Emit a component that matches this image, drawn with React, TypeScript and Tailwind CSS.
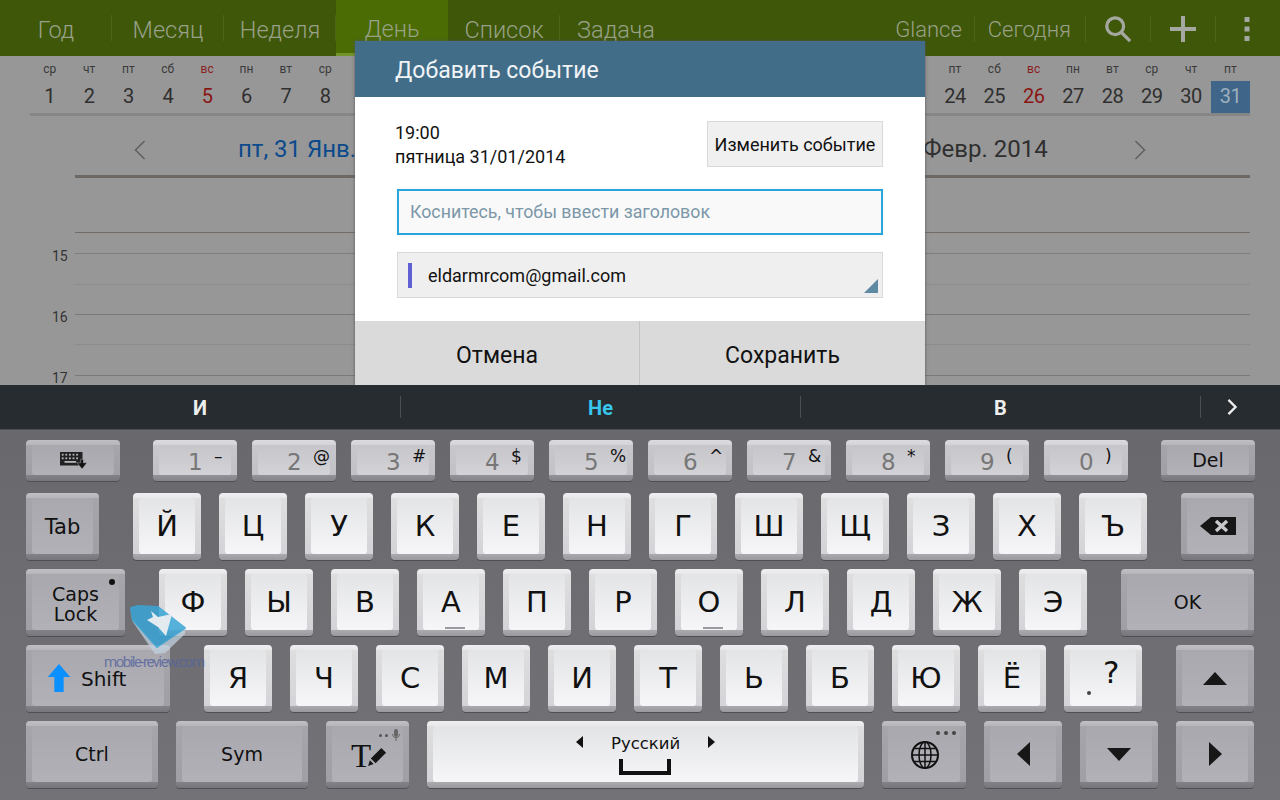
import type { ReactNode } from 'react';

const tabs = ['Год', 'Месяц', 'Неделя', 'День', 'Список', 'Задача'];
const weekNames = ['пн', 'вт', 'ср', 'чт', 'пт', 'сб', 'вс'];
const days = Array.from({ length: 31 }, (_, i) => ({
  num: i + 1,
  name: weekNames[(i + 2) % 7],
  sunday: (i + 2) % 7 === 6,
  // these sit behind the dialog
  covered: i + 1 > 8 && i + 1 < 24,
}));

const keyKinds = {
  light: {
    outer:
      'bg-[linear-gradient(#efeff1_0,#e8e8ea_5px,#dededf_5px,#d4d4d8_calc(100%-6px),#abaaaf_calc(100%-6px),#9a999e_100%)]',
    face: 'bg-gradient-to-b from-[#e3e4e6] to-[#f6f6f8] text-[#111]',
  },
  gray: {
    outer:
      'bg-[linear-gradient(#c0bfc4_0,#b6b5ba_5px,#a6a5ab_5px,#a09fa5_calc(100%-6px),#838288_calc(100%-6px),#77767c_100%)]',
    face: 'bg-gradient-to-b from-[#a9a8af] to-[#b2b1b8] text-[#111]',
  },
  digit: {
    outer:
      'bg-[linear-gradient(#dcdbdf_0,#d4d3d7_5px,#c8c7cc_5px,#c2c1c6_calc(100%-6px),#939298_calc(100%-6px),#85848a_100%)]',
    face: 'bg-gradient-to-b from-[#c6c5ca] to-[#d3d2d7] text-[#777]',
  },
};

function Key({
  kind = 'light',
  className = '',
  children,
}: {
  kind?: 'light' | 'gray' | 'digit';
  className?: string;
  children?: ReactNode;
}) {
  const k = keyKinds[kind];
  return (
    <div
      className={`flex-none flex rounded-[4px] pt-[5px] px-[6px] pb-[6px] shadow-[0_1px_0_#4f4e53] ${k.outer} ${className}`}
    >
      <div className={`relative flex-1 flex items-center justify-center rounded-[3px] ${k.face}`}>
        {children}
      </div>
    </div>
  );
}

function LetterKey({ ch, mark }: { ch: string; mark?: boolean }) {
  return (
    <Key className="w-[68px]">
      <span className="text-[29px] leading-none">{ch}</span>
      {mark && <span className="absolute bottom-[1px] left-[22px] w-[20px] h-[2px] bg-[#9a9a9f]" />}
    </Key>
  );
}

function DigitKey({ d, s }: { d: string; s: string }) {
  return (
    <Key kind="digit" className="w-[84px]">
      <span className="absolute left-[29px] top-[6px] text-[23px] leading-none">{d}</span>
      <span className="absolute left-[55px] top-[0px] text-[17px] leading-[22px] text-[#111]">{s}</span>
    </Key>
  );
}

function Triangle({ dir }: { dir: 'up' | 'down' | 'left' | 'right' }) {
  const points = {
    up: '0,13 24,13 12,0',
    down: '0,0 24,0 12,13',
    left: '13,0 13,24 0,12',
    right: '0,0 0,24 13,12',
  }[dir];
  const size = dir === 'up' || dir === 'down' ? 'w-[24px] h-[13px]' : 'w-[13px] h-[24px]';
  const box = dir === 'up' || dir === 'down' ? '0 0 24 13' : '0 0 13 24';
  return (
    <svg viewBox={box} className={size}>
      <polygon points={points} fill="#171717" />
    </svg>
  );
}

function TopBar() {
  return (
    <div className="flex h-[56px] bg-[#3f5708] text-[#98a188] text-[23.5px] font-light shadow-[0_2px_2px_#77777a]">
      {tabs.map((t) => (
        <div
          key={t}
          className={
            t === 'День'
              ? 'w-[112px] flex items-center justify-center pt-[7px] bg-[#4b6b05] border-b-[3px] border-[#75932c]'
              : 'w-[112px] flex items-center justify-center pt-[5px] relative'
          }
        >
          {t}
          {t !== 'Задача' && t !== 'День' && (
            <span className="absolute right-0 top-[15px] h-[26px] w-px bg-[#4d6419]" />
          )}
        </div>
      ))}
      <div className="flex-1" />
      <div className="flex items-center pt-[2px] text-[22px] pr-[30px]">
        <span className="mr-[12px]">Glance</span>
        <span className="h-[26px] w-px bg-[#4d6419] mr-[13px]" />
        <span className="mr-[14px]">Сегодня</span>
        <span className="h-[26px] w-px bg-[#4d6419] mr-[18px]" />
        <svg viewBox="0 0 30 30" className="w-[28px] h-[28px] mr-[18px]">
          <circle cx="12" cy="12" r="9" fill="none" stroke="#a5a8a0" strokeWidth="3.5" />
          <line x1="18.5" y1="18.5" x2="28" y2="28" stroke="#a5a8a0" strokeWidth="3.5" />
        </svg>
        <span className="h-[26px] w-px bg-[#4d6419] mr-[19px]" />
        <svg viewBox="0 0 26 26" className="w-[26px] h-[26px] mr-[19px]">
          <rect x="0" y="11" width="26" height="4" fill="#a5a8a0" />
          <rect x="11" y="0" width="4" height="26" fill="#a5a8a0" />
        </svg>
        <span className="h-[26px] w-px bg-[#4d6419] mr-[28px]" />
        <svg viewBox="0 0 6 24" className="w-[6px] h-[24px]">
          <rect width="5" height="5" x="0.5" y="0" fill="#a5a8a0" />
          <rect width="5" height="5" x="0.5" y="9.5" fill="#a5a8a0" />
          <rect width="5" height="5" x="0.5" y="19" fill="#a5a8a0" />
        </svg>
      </div>
    </div>
  );
}

function Calendar() {
  return (
    <div className="flex-1 bg-[#979797] text-[#2f2f2f]">
      <div className="ml-[30px] w-[1220px] h-[60px] border-b-[3px] border-[#868686] flex">
        {days.map((d) => (
          <div key={d.num} className={`flex-1 flex flex-col items-center ${d.covered ? 'invisible' : ''}`}>
            <span className={`text-[12px] leading-[12px] mt-[7px] ${d.sunday ? 'text-[#8a1f1f]' : 'text-[#3a3a3a]'}`}>
              {d.name}
            </span>
            <span
              className={`text-[20px] tracking-[-0.5px] leading-[30px] mt-[6px] w-full h-[32px] text-center ${
                d.sunday ? 'text-[#8a1515]' : ''
              } ${d.num === 31 ? 'bg-[#3f6588] text-[#9eb0be]' : ''}`}
            >
              {d.num}
            </span>
          </div>
        ))}
      </div>
      <div className="relative h-[62px] ml-[75px] w-[1175px] border-b-[3px] border-[#6d6863] text-[24px]">
        <svg viewBox="0 0 12 22" className="absolute left-[59px] top-[24px] w-[12px] h-[20px]">
          <polyline points="11,1 1,11 11,21" fill="none" stroke="#5f5f5f" strokeWidth="1.6" />
        </svg>
        <span className="absolute left-[163px] top-[17px] text-[#0b4a8c] leading-[32px] whitespace-nowrap">
          пт, 31 Янв.
        </span>
        <span className="absolute left-[848px] top-[17px] leading-[32px] whitespace-nowrap">Февр. 2014</span>
        <svg viewBox="0 0 12 22" className="absolute left-[1059px] top-[24px] w-[12px] h-[20px]">
          <polyline points="1,1 11,11 1,21" fill="none" stroke="#5f5f5f" strokeWidth="1.6" />
        </svg>
      </div>
      <div className="ml-[75px] w-[1175px]">
        <div className="h-[55px] border-b border-[#736c66]" />
        <HourLine label="15" h="h-[21px]" line="border-[#7d7d7d]" />
        <div className="h-[31px] border-b border-[#8c8c8c]" />
        <HourLine label="16" h="h-[30px]" line="border-[#787878]" />
        <div className="h-[30px] border-b border-[#8c8c8c]" />
        <HourLine label="17" h="h-[31px]" line="border-[#7a7a7a]" />
      </div>
    </div>
  );
}

function HourLine({ label, h, line }: { label: string; h: string; line: string }) {
  return (
    <div className={`relative border-b ${h} ${line}`}>
      <span className="absolute left-[-23px] bottom-[-12px] text-[14px] leading-[18px] text-[#333]">{label}</span>
    </div>
  );
}

function Dialog() {
  return (
    <div className="absolute left-[355px] top-[41px] w-[570px] h-[344px] flex flex-col shadow-[0_0_3px_#555]">
      <div className="h-[56px] bg-[#426d89] text-[#f0f4f6] text-[23px] flex items-center pl-[40px] pt-[4px]">
        Добавить событие
      </div>
      <div className="flex-1 bg-white px-[42px] pt-[24px]">
        <div className="flex justify-between items-start">
          <div className="text-[18px] leading-[24px] text-[#111] -ml-[2px]">
            <div>19:00</div>
            <div>пятница 31/01/2014</div>
          </div>
          <div className="w-[176px] h-[46px] bg-[#f0f0f0] border border-[#d9d9d9] text-[18px] text-[#111] flex items-center justify-center">
            Изменить событие
          </div>
        </div>
        <div className="mt-[20px] h-[46px] border-2 border-[#2aa5da] bg-[#f9f9f9] text-[17.8px] text-[#7b97a8] flex items-center pl-[11px]">
          Коснитесь, чтобы ввести заголовок
        </div>
        <div className="relative mt-[17px] h-[46px] border border-[#d9d9d9] bg-[#efefef] text-[18px] text-[#111] flex items-center pl-[10px]">
          <span className="w-[4px] h-[25px] bg-[#6060d2] mr-[16px]" />
          eldarmrcom@gmail.com
          <svg viewBox="0 0 14 14" className="absolute right-[4px] bottom-[4px] w-[14px] h-[14px]">
            <polygon points="14,0 14,14 0,14" fill="#5f8aa3" />
          </svg>
        </div>
      </div>
      <div className="h-[64px] bg-[#dadada] flex text-[23px] text-[#111]">
        <div className="w-[285px] flex items-center justify-center border-r border-[#c4c4c4] pt-[6px]">Отмена</div>
        <div className="flex-1 flex items-center justify-center pt-[6px]">Сохранить</div>
      </div>
    </div>
  );
}

function Suggestions() {
  return (
    <div className="relative h-[45px] bg-[#272c30] flex text-[20px] font-bold text-[#eee] border-b border-[#4c4e52]">
      {['И', 'Не', 'В'].map((s) => (
        <div
          key={s}
          className={`w-[400px] first:w-[401px] flex items-center justify-center ${s === 'Не' ? 'text-[#38c6ee]' : ''}`}
        >
          <span className="flex-1 text-center pt-[2px]">{s}</span>
          <span className="h-[22px] w-px bg-[#4a4f53]" />
        </div>
      ))}
      <div className="flex-1 flex items-center justify-center pr-[18px]">
        <svg viewBox="0 0 12 18" className="w-[12px] h-[16px]">
          <polyline points="2,1 10,9 2,17" fill="none" stroke="#eee" strokeWidth="2.6" />
        </svg>
      </div>
    </div>
  );
}

function Keyboard() {
  return (
    <div className="flex-1 bg-gradient-to-b from-[#69686d] to-[#737277] px-[26px] pt-[10px] font-['DejaVu_Sans',sans-serif]">
      <div className="flex h-[41px] gap-[15px]">
        <Key kind="gray" className="w-[94px] mr-[18px]">
          <svg viewBox="0 0 30 22" className="w-[27px] h-[20px] mt-[1px]">
            <rect x="0" y="1" width="25" height="15" fill="#222" />
            <g fill="#b5b5ba">
              <rect x="2" y="3" width="2" height="2" />
              <rect x="6" y="3" width="2" height="2" />
              <rect x="10" y="3" width="2" height="2" />
              <rect x="14" y="3" width="2" height="2" />
              <rect x="18" y="3" width="2" height="2" />
              <rect x="2" y="7" width="2" height="2" />
              <rect x="6" y="7" width="2" height="2" />
              <rect x="10" y="7" width="2" height="2" />
              <rect x="14" y="7" width="2" height="2" />
              <rect x="18" y="7" width="2" height="2" />
              <rect x="5" y="11" width="13" height="2" />
            </g>
            <polygon points="19,13 23,13 23,9 26,9 26,13 30,13 24.5,20" fill="#111" stroke="#acabb3" strokeWidth="0.6" />
          </svg>
        </Key>
        <DigitKey d="1" s="–" />
        <DigitKey d="2" s="@" />
        <DigitKey d="3" s="#" />
        <DigitKey d="4" s="$" />
        <DigitKey d="5" s="%" />
        <DigitKey d="6" s="^" />
        <DigitKey d="7" s="&" />
        <DigitKey d="8" s="*" />
        <DigitKey d="9" s="(" />
        <DigitKey d="0" s=")" />
        <Key kind="gray" className="w-[94px] ml-[18px]">
          <span className="text-[19px]">Del</span>
        </Key>
      </div>

      <div className="flex h-[67px] gap-[18px] mt-[12px]">
        <Key kind="gray" className="w-[73px] mr-[16px]">
          <span className="text-[21px] pt-[4px]">Tab</span>
        </Key>
        {'ЙЦУКЕНГШЩЗХЪ'.split('').map((c) => (
          <LetterKey key={c} ch={c} />
        ))}
        <Key kind="gray" className="w-[73px] ml-[16px]">
          <svg viewBox="0 0 36 20" className="w-[36px] h-[20px]">
            <polygon points="0,10 11,1 36,1 36,19 11,19" fill="#161616" />
            <path d="M16 5 L27 15 M27 5 L16 15" stroke="#c9c9cc" strokeWidth="3.4" />
          </svg>
        </Key>
      </div>

      <div className="flex h-[67px] gap-[18px] mt-[9px]">
        <Key kind="gray" className="w-[99px] mr-[16px]">
          <span className="text-[19px] leading-[20px] text-center pt-[3px]">
            Caps
            <br />
            Lock
          </span>
          <span className="absolute right-[4px] top-[5px] w-[6px] h-[6px] rounded-full bg-[#111]" />
        </Key>
        {'ФЫВАПРОЛДЖЭ'.split('').map((c) => (
          <LetterKey key={c} ch={c} mark={c === 'А' || c === 'О'} />
        ))}
        <Key kind="gray" className="w-[133px] ml-[16px]">
          <span className="text-[19px]">OK</span>
        </Key>
      </div>

      <div className="flex h-[67px] gap-[18px] mt-[9px]">
        <Key kind="gray" className="w-[144px] mr-[16px]">
          <svg viewBox="0 0 24 30" className="absolute left-[15px] top-[14px] w-[24px] h-[28px]">
            <polygon points="12,0 24,14 17,14 17,30 7,30 7,14 0,14" fill="#0a90ff" />
          </svg>
          <span className="absolute left-[49px] top-[20px] text-[20px] leading-[18px]">Shift</span>
        </Key>
        {'ЯЧСМИТЬБЮЁ'.split('').map((c) => (
          <LetterKey key={c} ch={c} />
        ))}
        <Key className="w-[78px]">
          <span className="absolute left-[17px] bottom-[11px] w-[4px] h-[4px] rounded-full bg-[#444]" />
          <span className="absolute left-[33px] top-[5px] text-[31px] leading-[34px]">?</span>
        </Key>
        <Key kind="gray" className="w-[78px] ml-[16px]">
          <Triangle dir="up" />
        </Key>
      </div>

      <div className="flex h-[67px] gap-[18px] mt-[9px]">
        <Key kind="gray" className="w-[132px]">
          <span className="text-[19px]">Ctrl</span>
        </Key>
        <Key kind="gray" className="w-[132px]">
          <span className="text-[19px]">Sym</span>
        </Key>
        <Key kind="gray" className="w-[83px]">
          <span className="absolute left-[19px] top-[12px] text-[33px] leading-[36px] font-['Liberation_Serif',serif]">
            T
          </span>
          <svg viewBox="0 0 20 20" className="absolute left-[36px] top-[21px] w-[19px] h-[19px]">
            <polygon points="14,1 19,6 8,17 3,12" fill="#161616" />
            <polygon points="2,14 6,18 0,20" fill="#161616" />
          </svg>
          <span className="absolute right-[15px] top-[8px] w-[3px] h-[3px] rounded-full bg-[#555]" />
          <span className="absolute right-[21px] top-[8px] w-[3px] h-[3px] rounded-full bg-[#555]" />
          <svg viewBox="0 0 8 13" className="absolute right-[3px] top-[3px] w-[8px] h-[13px]">
            <rect x="2" y="0" width="4" height="8" rx="2" fill="#666" />
            <path d="M0.5 5 C0.5 10 7.5 10 7.5 5 M4 9 V12" fill="none" stroke="#666" />
          </svg>
        </Key>
        <Key className="w-[437px]">
          <svg viewBox="0 0 7 12" className="absolute left-[143px] top-[10px] w-[7px] h-[12px]">
            <polygon points="7,0 7,12 0,6" fill="#111" />
          </svg>
          <span className="absolute left-[178px] top-[8px] text-[16.5px] leading-[20px]">Русский</span>
          <svg viewBox="0 0 7 12" className="absolute left-[275px] top-[10px] w-[7px] h-[12px]">
            <polygon points="0,0 0,12 7,6" fill="#111" />
          </svg>
          <span className="absolute left-[186px] top-[33px] w-[52px] h-[16px] border-[4px] border-t-0 border-[#111]" />
        </Key>
        <Key kind="gray" className="w-[84px]">
          <svg viewBox="0 0 28 28" className="absolute left-[23px] top-[15px] w-[28px] h-[28px]">
            <g fill="none" stroke="#111" strokeWidth="1.5">
              <circle cx="14" cy="14" r="13" strokeWidth="2" />
              <ellipse cx="14" cy="14" rx="6" ry="13" />
              <line x1="14" y1="1" x2="14" y2="27" />
              <line x1="1" y1="14" x2="27" y2="14" />
              <path d="M3 7.5 H25 M3 20.5 H25" />
            </g>
          </svg>
          <span className="absolute right-[4px] top-[5px] w-[4px] h-[4px] rounded-full bg-[#444]" />
          <span className="absolute right-[12px] top-[5px] w-[4px] h-[4px] rounded-full bg-[#444]" />
          <span className="absolute right-[20px] top-[5px] w-[4px] h-[4px] rounded-full bg-[#444]" />
        </Key>
        <Key kind="gray" className="w-[78px]">
          <Triangle dir="left" />
        </Key>
        <Key kind="gray" className="w-[78px]">
          <Triangle dir="down" />
        </Key>
        <Key kind="gray" className="w-[78px]">
          <Triangle dir="right" />
        </Key>
      </div>
    </div>
  );
}

function Watermark() {
  return (
    <>
      <svg viewBox="0 0 66 56" className="absolute left-[125px] top-[600px] w-[66px] h-[56px]">
        <polygon points="5,12 8,22 30,54 40,53 60,34 60,28 32,47 8,20" fill="#c2d2e0" opacity="0.75" />
        <polygon
          points="6,8 13,6 33,7 60,28 32,47 8,20"
          fill="#3aa6d6"
          opacity="0.85"
          stroke="#3aa6d6"
          strokeWidth="2"
          strokeLinejoin="round"
        />
        <polygon points="26,11 33,17 47,14 41,36 33,27 22,20 28,17" fill="#e3ebf0" />
      </svg>
      <span className="absolute left-[104px] top-[654px] text-[15px] leading-[16px] tracking-[-1.5px] text-[#55649c]/80 font-['Roboto',sans-serif]">
        mobile-review.com
      </span>
    </>
  );
}

export default function App() {
  return (
    <div className="relative w-[1280px] h-[800px] overflow-hidden flex flex-col font-['Roboto',sans-serif]">
      <div className="relative h-[385px] flex flex-col">
        <TopBar />
        <Calendar />
        <Dialog />
      </div>
      <Suggestions />
      <Keyboard />
      <Watermark />
    </div>
  );
}
